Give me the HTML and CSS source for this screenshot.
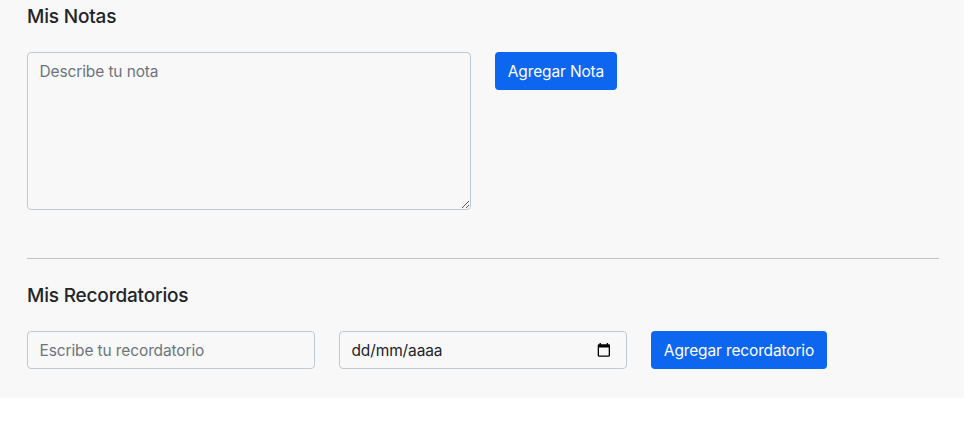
FILE: index.html
```html
<!DOCTYPE html>
<html lang="es">
<head>
<meta charset="utf-8">
<title>Mis Notas</title>
<link rel="stylesheet" href="styles.css">
</head>
<body>
<main class="panel">
  <section class="notes">
    <h2 class="title">Mis Notas</h2>
    <form class="row">
      <div class="note-wrap">
        <textarea class="control note" placeholder="Describe tu nota"></textarea>
        <svg class="grip" width="8" height="8" viewBox="0 0 8 8" shape-rendering="crispEdges"><path d="M0 7h1v-1h1v-1h1v-1h1v-1h1v-1h1v-1h1v1h-1v1h-1v1h-1v1h-1v1h-1v1h-1v1h-1zM4 7h1v-1h1v-1h1v1h-1v1h-1v1h-1z"/></svg>
      </div>
      <button type="button" class="btn btn-note">Agregar Nota</button>
    </form>
  </section>
  <hr class="divider">
  <section>
    <h2 class="title">Mis Recordatorios</h2>
    <form class="row">
      <input class="control field" type="text" placeholder="Escribe tu recordatorio">
      <div class="control field date">
        <span>dd/mm/aaaa</span>
        <svg class="calendar" width="14" height="15" viewBox="0 0 14 15"><path d="M2.5 0h1.4v1.3h5.8V0h1.4v1.3h.7c.7 0 1.2.5 1.2 1.2v10.1c0 .7-.5 1.2-1.2 1.2H1.9c-.7 0-1.2-.5-1.2-1.2V2.5c0-.7.5-1.2 1.2-1.2h.6zM2 4.6v7.9h9.7V4.6z" fill-rule="evenodd"/></svg>
      </div>
      <button type="button" class="btn btn-reminder">Agregar recordatorio</button>
    </form>
  </section>
</main>
</body>
</html>
```
FILE: styles.css
```css
* { box-sizing: border-box; }
body {
  margin: 0;
  background: #fff;
  color: #212529;
  font: 400 15.5px/24px Inter, "Liberation Sans", sans-serif;
}
.panel {
  height: 398px;
  padding: 5px 25px 0 27px;
  background: #f8f8f8;
}
.notes { height: 253px; }
.title {
  margin: 0 0 23px;
  font-size: 19px;
  font-weight: 500;
  line-height: 24px;
  letter-spacing: -0.18px;
}
.row {
  display: flex;
  align-items: flex-start;
  gap: 24px;
}
.control {
  display: block;
  margin: 0;
  padding: 6px 11.5px;
  border: 1px solid #c0c8d0;
  border-radius: 4px;
  background: transparent;
  color: #212529;
  font: inherit;
  letter-spacing: -0.12px;
}
.control::placeholder { color: #6c757d; opacity: 1; }
.note-wrap { position: relative; width: 444px; }
.note { width: 100%; height: 158px; padding-top: 7px; resize: none; }
.grip { position: absolute; right: 1px; bottom: 2px; fill: #555; }
.field { width: 288px; height: 38px; }
.date {
  display: flex;
  align-items: center;
  justify-content: space-between;
  padding: 7px 15px 5px 11.5px;
}
.calendar { margin-top: -2px; fill: #000; }
.btn {
  height: 38px;
  padding: 2px 0 0;
  border: 0;
  border-radius: 4px;
  background: #0d66f0;
  color: #fff;
  font: inherit;
  letter-spacing: -0.14px;
}
.btn-note { width: 122px; }
.btn-reminder { width: 176px; }
.divider {
  height: 1px;
  margin: 0 0 25px;
  border: 0;
  background: #c2c2c2;
}
```
